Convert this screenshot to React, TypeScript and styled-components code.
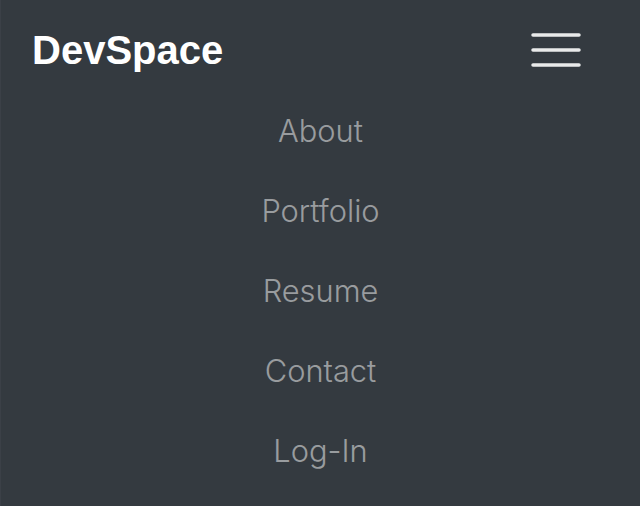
import React from "react";
import styled, { createGlobalStyle } from "styled-components";

const GlobalStyle = createGlobalStyle`
  html, body {
    margin: 0;
    padding: 0;
    background: #343a40;
  }
  * { box-sizing: border-box; }
`;

const Navbar = styled.nav`
  width: 640px;
  min-height: 506px;
  background: #343a40;
  border-left: 1px solid #3b4047;
  display: flex;
  flex-direction: column;
`;

const Header = styled.div`
  display: flex;
  align-items: center;
  justify-content: space-between;
  padding: 20px 32px 11px 31px;
`;

const Brand = styled.a`
  font-family: "Liberation Sans", Arial, sans-serif;
  font-weight: 700;
  font-size: 40px;
  line-height: 60px;
  color: #ffffff;
  text-decoration: none;
`;

const Toggler = styled.button`
  display: flex;
  align-items: center;
  justify-content: center;
  background: transparent;
  border: none;
  padding: 0 27px 0 24px;
  height: 60px;
  cursor: pointer;
`;

const Menu = styled.ul`
  list-style: none;
  margin: 0;
  padding: 0 0 15px;
  display: flex;
  flex-direction: column;
  align-items: center;
`;

const NavLink = styled.a`
  display: block;
  padding: 16px 0;
  font-family: Inter, "Noto Sans", sans-serif;
  font-weight: 300;
  font-size: 30.8px;
  line-height: 48px;
  color: rgba(255, 255, 255, 0.5);
  text-decoration: none;
  text-align: center;
`;

const items = ["About", "Portfolio", "Resume", "Contact", "Log-In"];

export default function App() {
  return (
    <>
      <GlobalStyle />
      <Navbar>
        <Header>
          <Brand href="#">DevSpace</Brand>
          <Toggler aria-label="Toggle navigation">
            <svg width="50" height="36" viewBox="0 0 50 36">
              <g stroke="#e9eaea" strokeWidth="3.5" strokeLinecap="round">
                <path d="M2 3h46M2 18h46M2 33h46" />
              </g>
            </svg>
          </Toggler>
        </Header>
        <Menu>
          {items.map((t) => (
            <li key={t}>
              <NavLink href="#">{t}</NavLink>
            </li>
          ))}
        </Menu>
      </Navbar>
    </>
  );
}
